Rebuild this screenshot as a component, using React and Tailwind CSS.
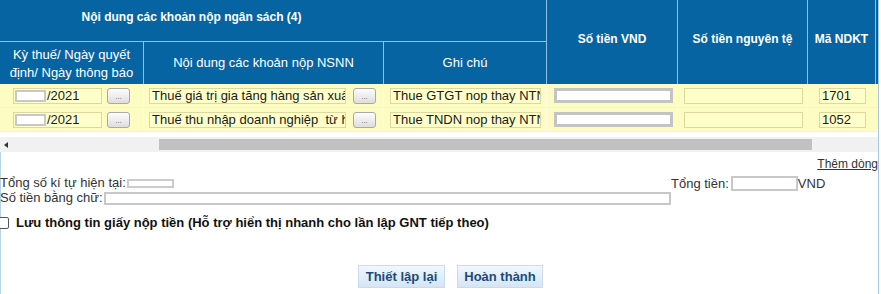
import React from 'react'

const DONG = [
  {
    ky: '/2021',
    noiDung: 'Thuế giá trị gia tăng hàng sản xuất',
    ghiChu: 'Thue GTGT nop thay NTN',
    ma: '1701',
  },
  {
    ky: '/2021',
    noiDung: 'Thuế thu nhập doanh nghiệp  từ ho',
    ghiChu: 'Thue TNDN nop thay NTN',
    ma: '1052',
  },
]

function NutBaCham() {
  return (
    <div className="w-[23px] h-[16px] rounded-[3px] border border-[#a9a9a9] bg-gradient-to-b from-[#fdfdfd] to-[#dedede] flex items-end justify-center pb-[2px]">
      <span className="text-[8px] leading-[8px] text-[#666]">...</span>
    </div>
  )
}

function O({ className = '', children }) {
  return (
    <div className={`h-[16px] border border-[#dcd8a0] bg-[#ffffca] text-[13px] leading-[14px] text-[#1a1a1a] whitespace-pre overflow-hidden ${className}`}>
      {children}
    </div>
  )
}

export default function App() {
  return (
    <div className="w-[881px] h-[294px] bg-white overflow-hidden font-['Liberation_Sans',Arial,sans-serif]">
      <div className="w-[879px] border-r border-[#a9c6e0]">
        {/* Bảng */}
        <div className="grid grid-cols-[144px_240px_163px_131px_130px_68px_2px] grid-rows-[42px_42px] bg-[#0764a3] text-white">
          <div className="col-span-3 row-start-1 border-b border-r border-[#8ec1ea] flex pt-[10px] text-[12px] font-bold leading-[15px]">
            <div className="w-[383px] text-center">Nội dung các khoản nộp ngân sách (4)</div>
          </div>
          <div className="col-start-4 row-span-2 border-r border-[#8ec1ea] flex items-center justify-center pb-[7px] text-[12px] font-bold">
            Số tiền VND
          </div>
          <div className="col-start-5 row-span-2 border-r border-[#8ec1ea] flex items-center justify-center pb-[7px] text-[12px] font-bold">
            Số tiền nguyên tệ
          </div>
          <div className="col-start-6 row-span-2 border-r border-[#8ec1ea] flex items-center justify-center pb-[7px] text-[12px] font-bold">
            Mã NDKT
          </div>
          <div className="col-start-7 row-span-2" />
          <div className="row-start-2 col-start-1 border-r border-[#8ec1ea] flex items-center justify-center text-center text-[13px] leading-[18px] pt-[1px]">
            Kỳ thuế/ Ngày quyết<br />định/ Ngày thông báo
          </div>
          <div className="row-start-2 col-start-2 border-r border-[#8ec1ea] flex items-center justify-center text-[13px]">
            Nội dung các khoản nộp NSNN
          </div>
          <div className="row-start-2 col-start-3 border-r border-[#8ec1ea] flex items-center justify-center text-[13px]">
            Ghi chú
          </div>
        </div>

        {DONG.map((d, i) => (
          <div key={i} className="grid grid-cols-[144px_240px_163px_131px_130px_68px_2px] h-[24px] bg-[#fdfdc3] border-b border-[#f3f3dc]">
            <div className="flex items-center pl-[13px] gap-[5px] border-r border-[#fbfbe6]">
              <O className="w-[89px] flex items-center">
                <span className="ml-[1px] w-[31px] h-[12px] bg-white border-2 border-[#c8c8c8]" />
                <span className="ml-[1px]">{d.ky}</span>
              </O>
              <NutBaCham />
            </div>
            <div className="flex items-center pl-[5px] gap-[7px] border-r border-[#fbfbe6]">
              <O className="w-[197px] pl-[2px]">{d.noiDung}</O>
              <NutBaCham />
            </div>
            <div className="flex items-center pl-[6px] border-r border-[#fbfbe6]">
              <O className="w-[151px] pl-[2px]">{d.ghiChu}</O>
            </div>
            <div className="flex items-center pl-[7px] border-r border-[#fbfbe6]">
              <div className="w-[119px] h-[15px] bg-white border-[3px] border-[#c4c4c4]" />
            </div>
            <div className="flex items-center pl-[6px] border-r border-[#fbfbe6]">
              <O className="w-[119px]" />
            </div>
            <div className="flex items-center pl-[11px]">
              <O className="w-[47px] pl-[2px]">{d.ma}</O>
            </div>
            <div className="bg-[#fdfdc3]" />
          </div>
        ))}

        {/* Thanh cuộn */}
        <div className="mt-[5px] h-[15px] bg-[#f1f1f1] flex items-start">
          <div className="w-[159px] h-full flex items-center pl-[4px]">
            <div className="w-0 h-0 border-y-[3px] border-y-transparent border-r-[4px] border-r-[#333]" />
          </div>
          <div className="mt-[2px] w-[653px] h-[11px] bg-[#c1c1c1]" />
        </div>

        {/* Phần dưới */}
        <div className="h-[143px] border-l border-[#b8d4ea] text-[13px] leading-[15px] text-[#333]">
          <div className="pt-[5px] flex justify-end">
            <span className="text-[12px] underline text-[#333]">Thêm dòng</span>
          </div>
          <div className="mt-[3px] flex items-center h-[15px]">
            <div className="w-[670px] flex items-center">
              <span className="-ml-[1px]">Tổng số kí tự hiện tại:</span>
              <span className="ml-[1px] mt-[1px] w-[47px] h-[9px] bg-white border-2 border-[#cccccc]" />
            </div>
            <div className="flex items-center mt-[2px]">
              <span>Tổng tiền:</span>
              <span className="ml-[2px] w-[67px] h-[15px] bg-white border-2 border-[#c8c8c8]" />
              <span>VND</span>
            </div>
          </div>
          <div className="flex items-center h-[15px]">
            <span className="-ml-[1px]">Số tiền bằng chữ:</span>
            <span className="ml-[1px] mt-[2px] w-[567px] h-[13px] bg-white border-2 border-[#c8c8c8]" />
          </div>
          <div className="mt-[10px] flex items-center h-[15px]">
            <span className="-ml-[4px] w-[12px] h-[12px] rounded-[2px] border border-[#555] bg-white" />
            <span className="ml-[7px] font-bold text-[#111]">
              Lưu thông tin giấy nộp tiền (Hỗ trợ hiển thị nhanh cho lần lập GNT tiếp theo)
            </span>
          </div>
          <div className="mt-[35px] flex pl-[357px] gap-[12px]">
            <button className="w-[87px] h-[23px] border border-[#c9dbee] bg-gradient-to-b from-[#f1f7fd] to-[#d4e5f6] text-[13px] font-bold text-[#1d4a78]">
              Thiết lập lại
            </button>
            <button className="w-[86px] h-[23px] border border-[#c9dbee] bg-gradient-to-b from-[#f1f7fd] to-[#d4e5f6] text-[13px] font-bold text-[#1d4a78]">
              Hoàn thành
            </button>
          </div>
        </div>
      </div>
    </div>
  )
}
